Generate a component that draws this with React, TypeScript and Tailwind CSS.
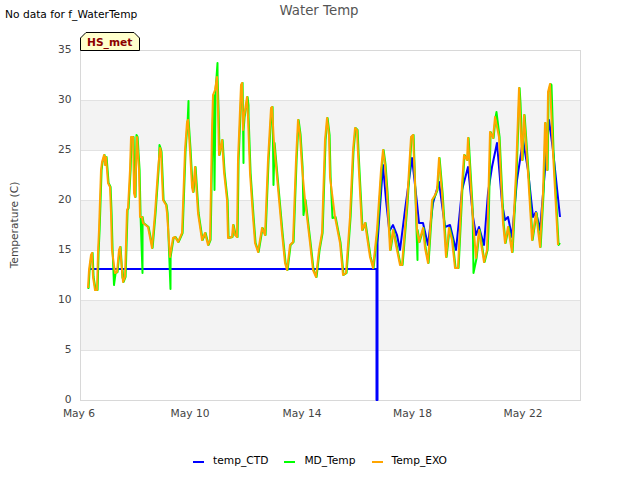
/**
 * Water Temp chart - three temperature series over a banded plot
 */

import type { ReactNode } from "react";

type Pt = [number, number];

// Traces are in page pixels, read off the plot (10px per degree, 27.7px per day)
const EXO: Pt[] = [
  [88, 288], [89, 270], [91, 255], [92, 253], [93, 277], [95, 290], [97, 290], [98, 252], [99, 230], [101, 170], [102, 162],
  [104, 155], [105, 165], [106, 157], [108, 183], [110, 187], [111, 213], [112, 250], [115, 273], [117, 272], [119, 250],
  [120, 247], [122, 270], [123, 282], [125, 277], [127, 210], [128, 208], [130, 170], [131, 137], [133, 137], [134, 193],
  [135, 197], [137, 137], [139, 170], [140, 217], [142, 217], [143, 223], [148, 227], [152, 248], [155, 213], [158, 170],
  [160, 148], [161, 152], [163, 200], [166, 205], [167, 213], [170, 257], [173, 238], [175, 237], [178, 242], [182, 233],
  [185, 150], [187, 122], [188, 120], [190, 150], [192, 187], [193, 192], [195, 167], [198, 213], [202, 240], [205, 233],
  [208, 245], [210, 240], [212, 130], [213, 95], [215, 90], [217, 77], [218, 110], [219, 155], [222, 140], [224, 172],
  [227, 200], [228, 238], [232, 237], [233, 225], [235, 235], [237, 237], [238, 160], [241, 85], [242, 83], [243, 130],
  [244, 117], [247, 97], [248, 117], [250, 173], [253, 217], [255, 243], [258, 252], [262, 228], [265, 235], [268, 160],
  [271, 108], [272, 107], [274, 143], [277, 177], [282, 233], [285, 263], [287, 270], [290, 245], [293, 242], [296, 160],
  [298, 120], [300, 135], [302, 167], [305, 200], [310, 243], [313, 270], [316, 277], [319, 250], [322, 233], [325, 140],
  [327, 118], [329, 135], [330, 177], [335, 217], [340, 243], [343, 275], [346, 273], [350, 217], [353, 150], [355, 128],
  [357, 130], [358, 153], [362, 230], [365, 223], [370, 257], [373, 268], [377, 230], [381, 170], [383, 150], [385, 165],
  [387, 193], [390, 250], [393, 230], [397, 250], [400, 265], [402, 265], [407, 203], [411, 137], [413, 135], [417, 230],
  [419, 242], [423, 228], [425, 248], [428, 263], [432, 200], [435, 195], [437, 190], [439, 158], [442, 193], [446, 257],
  [449, 228], [452, 240], [455, 268], [458, 268], [462, 185], [464, 155], [467, 160], [468, 138], [472, 207], [476, 258],
  [479, 230], [484, 262], [487, 250], [490, 132], [493, 138], [495, 117], [499, 137], [503, 223], [505, 243], [508, 227],
  [512, 252], [516, 173], [519, 88], [522, 160], [524, 115], [528, 173], [532, 240], [536, 213], [540, 247], [543, 193],
  [545, 123], [547, 170], [548, 92], [550, 84], [553, 153], [558, 245],
];

// Where the MD_Temp line leaves the EXO line
const MD_SPIKES: Pt[] = [
  [87.5, 288], [114, 285], [122.5, 278], [136.5, 135], [142.5, 273], [159.5, 145], [170.5, 289], [188.5, 101], [214.5, 190],
  [217.5, 63], [243.5, 163], [248.5, 105], [273.5, 185], [303.5, 215], [332.5, 218], [417.5, 260], [473.5, 273], [488.5, 230],
  [496.5, 112], [520.5, 103], [551.5, 85], [560, 243],
];

const MD: Pt[] = [...EXO.map(([x, y]): Pt => [x + 0.6, y]), ...MD_SPIKES].sort((a, b) => a[0] - b[0]);

const CTD: Pt[] = [
  [90, 269], [376.5, 269], [376.5, 400], [377.5, 400], [377.5, 243], [383, 165], [386, 200], [389, 228], [390, 230], [393, 225],
  [397, 235], [400, 250], [405, 210], [412, 158], [417, 203], [419, 223], [423, 223], [428, 245], [433, 203], [439, 182],
  [445, 227], [450, 225], [456, 250], [462, 190], [468, 167], [473, 217], [476, 235], [479, 227], [484, 245], [488, 193],
  [492, 167], [497, 143], [502, 203], [505, 220], [508, 217], [512, 237], [517, 180], [523, 140], [528, 170], [533, 217],
  [536, 212], [540, 230], [545, 170], [549, 120], [553, 150], [560, 217],
];

const BANDS = [100, 200, 300];
const GRID = [100, 150, 200, 250, 300, 350];
const Y_TICKS: [string, number][] = [["35", 50], ["30", 100], ["25", 150], ["20", 200], ["15", 250], ["10", 300], ["5", 350], ["0", 400]];
const X_TICKS: [string, number][] = [["May 6", 79], ["May 10", 190], ["May 14", 302], ["May 18", 412.5], ["May 22", 523]];
const LEGEND = [
  { label: "temp_CTD", swatch: "bg-[#0000ff]" },
  { label: "MD_Temp", swatch: "bg-[#00ff00]" },
  { label: "Temp_EXO", swatch: "bg-[#ffa500]" },
];

function toPoints(pts: Pt[]): string {
  return pts.map(([x, y]) => `${x},${y}`).join(" ");
}

function PlotArea(): ReactNode {
  return (
    <svg width="640" height="400" viewBox="0 40 640 400" className="block">
      {BANDS.map((y) => (
        <rect key={y} x="80" y={y} width="500" height="50" fill="#f3f3f3" />
      ))}
      {GRID.map((y) => (
        <line key={y} x1="80" x2="580" y1={y + 0.5} y2={y + 0.5} stroke="#e2e2e2" />
      ))}
      <rect x="80.5" y="50.5" width="500" height="350" fill="none" stroke="#d8d8d8" />

      {Y_TICKS.map(([label, y]) => (
        <text key={label} x="71.5" y={y + 3} textAnchor="end" fontSize="10.67" fill="#444444">
          {label}
        </text>
      ))}
      {X_TICKS.map(([label, x]) => (
        <text key={label} x={x} y="417" textAnchor="middle" fontSize="10.67" fill="#444444">
          {label}
        </text>
      ))}
      <text x="0" y="0" transform="translate(18 225) rotate(-90)" textAnchor="middle" fontSize="10.67" fill="#444444">
        Temperature (C)
      </text>

      <polyline points={toPoints(CTD)} fill="none" stroke="#0000ff" strokeWidth="2" strokeLinejoin="round" />
      <polyline points={toPoints(MD)} fill="none" stroke="#00ff00" strokeWidth="2" strokeLinejoin="round" />
      <polyline points={toPoints(EXO)} fill="none" stroke="#ffa500" strokeWidth="2" strokeLinejoin="round" />
    </svg>
  );
}

export default function App(): ReactNode {
  return (
    <div className="relative w-[640px] h-[480px] overflow-hidden bg-white font-['DejaVu_Sans',sans-serif]">
      <div className="flex h-[40px]">
        <div className="w-0 pl-[5px] pt-[8px] text-[10.67px] leading-[13px] whitespace-nowrap text-black">
          No data for f_WaterTemp
        </div>
        <div className="flex-1 pt-[3px] pr-[7px] text-center text-[13.33px] leading-[16px] text-[#555555]">Water Temp</div>
      </div>

      <PlotArea />

      <div className="flex justify-center gap-[16px] pt-[14px] text-[10.67px] leading-[13px] text-black">
        {LEGEND.map((item) => (
          <div key={item.label} className="flex items-center gap-[9px]">
            <span className={`w-[11px] h-[2px] mt-[2px] ${item.swatch}`} />
            <span>{item.label}</span>
          </div>
        ))}
      </div>

      {/* Series tag sitting on the plot corner */}
      <div className="absolute left-[80px] top-[32px] w-[60px] h-[19px]">
        <svg width="60" height="19" viewBox="0 0 60 19" className="absolute inset-0">
          <polygon points="0.5,18.5 0.5,6 6,0.5 54,0.5 59.5,6 59.5,18.5" fill="#ffffcc" stroke="#000000" />
        </svg>
        <span className="absolute left-[7px] top-[4px] text-[10.67px] leading-[13px] font-bold text-[#8b0000]">HS_met</span>
      </div>
    </div>
  );
}
